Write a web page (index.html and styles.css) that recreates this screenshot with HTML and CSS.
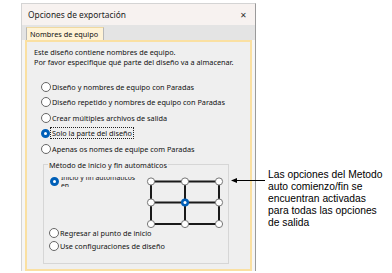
FILE: index.html
```html
<!DOCTYPE html>
<html lang="es">
<head>
<meta charset="utf-8">
<title>Opciones de exportación</title>
<link rel="stylesheet" href="styles.css">
</head>
<body>
<div class="stage">
  <div class="dialog">
    <div class="titlebar">
      <span class="title">Opciones de exportación</span>
      <span class="close">✕</span>
    </div>
    <div class="tabstrip">
      <div class="tab">Nombres de equipo</div>
    </div>
    <div class="panel">
      <p class="intro">Este diseño contiene nombres de equipo.<br>Por favor especifique qué parte del diseño va a almacenar.</p>
      <div class="options">
        <div class="opt"><span class="radio"></span><span>Diseño y nombres de equipo con Paradas</span></div>
        <div class="opt"><span class="radio"></span><span>Diseño repetido y nombres de equipo con Paradas</span></div>
        <div class="opt"><span class="radio"></span><span>Crear múltiples archivos de salida</span></div>
        <div class="opt"><span class="radio on"></span><span class="focus">Solo la parte del diseño</span></div>
        <div class="opt"><span class="radio"></span><span>Apenas os nomes de equipe com Paradas</span></div>
      </div>
      <fieldset class="group">
        <legend>Método de inicio y fin automáticos</legend>
        <div class="auto-row">
          <div class="auto-opt">
            <span class="radio on"></span>
            <span class="clip"><span class="clip-text">Inicio y fin automáticos en</span></span>
          </div>
          <svg class="grid" width="80" height="52" viewBox="0 0 80 52">
            <g stroke="#1a1a1a" stroke-width="2">
              <line x1="5" y1="4.5" x2="73" y2="4.5"/>
              <line x1="5" y1="25.5" x2="73" y2="25.5"/>
              <line x1="5" y1="47" x2="73" y2="47"/>
              <line x1="5" y1="4.5" x2="5" y2="47"/>
              <line x1="39" y1="4.5" x2="39" y2="47"/>
              <line x1="73" y1="4.5" x2="73" y2="47"/>
            </g>
            <g fill="#fff" stroke="#777" stroke-width="1">
              <circle cx="5" cy="4.5" r="3.6"/>
              <circle cx="39" cy="4.5" r="3.6"/>
              <circle cx="73" cy="4.5" r="3.6"/>
              <circle cx="5" cy="25.5" r="3.6"/>
              <circle cx="73" cy="25.5" r="3.6"/>
              <circle cx="5" cy="47" r="3.6"/>
              <circle cx="39" cy="47" r="3.6"/>
              <circle cx="73" cy="47" r="3.6"/>
            </g>
            <circle cx="39" cy="25.5" r="4" fill="#005fb8"/>
            <circle cx="39" cy="25.5" r="1.5" fill="#fff"/>
          </svg>
        </div>
        <div class="opt small"><span class="radio"></span><span>Regresar al punto de inicio</span></div>
        <div class="opt small"><span class="radio"></span><span>Use configuraciones de diseño</span></div>
      </fieldset>
    </div>
  </div>
  <p class="callout">Las opciones del Metodo<br>auto comienzo/fin se<br>encuentran activadas<br>para todas las opciones<br>de salida</p>
  <svg class="arrow" width="34" height="7" viewBox="0 0 34 7">
    <line x1="3" y1="3.5" x2="34" y2="3.5" stroke="#000" stroke-width="1"/>
    <path d="M0 3.5 L6 1 L6 6 Z" fill="#000"/>
  </svg>
</div>
</body>
</html>
```

FILE: styles.css
```css
html, body {
  margin: 0;
  padding: 0;
  background: #fff;
}
body {
  font-family: "Noto Sans", "Open Sans", sans-serif;
  color: #111;
  width: 392px;
  height: 273px;
  overflow: hidden;
}
.stage {
  position: relative;
  display: flex;
  align-items: flex-start;
}
.dialog {
  flex: none;
  margin: 3px 0 0 21px;
  width: 235px;
  height: 268px;
  box-sizing: border-box;
  border: 1px solid #d4d4d4;
  border-right-color: #9a9a9a;
  border-bottom: none;
  background: #f6f6f6;
  display: flex;
  flex-direction: column;
}
.titlebar {
  flex: none;
  height: 21px;
  background: #f7f2f0;
  display: flex;
  align-items: center;
  justify-content: space-between;
  padding: 0 8px 0 6px;
  font-size: 8.4px;
  color: #222;
}
.close {
  font-size: 8px;
  color: #333;
  margin-top: -1px;
}
.tabstrip {
  flex: none;
  height: 15px;
  background: #e4e4e4;
  display: flex;
  align-items: flex-end;
  padding-left: 4px;
}
.tab {
  height: 12px;
  line-height: 12px;
  background: #fff3d6;
  border: 1px solid #b8b8b8;
  border-bottom: none;
  border-top-color: #f0d9a0;
  padding: 0 5px 0 3px;
  font-size: 7.3px;
  color: #111;
}
.panel {
  flex: 1;
  min-height: 0;
  margin: 0 3px 0 3px;
  border: 2px solid #fae0a2;
  background: #efefef;
  font-size: 7.3px;
  display: flex;
  flex-direction: column;
}
.intro {
  flex: none;
  margin: 5px 0 0 7px;
  line-height: 10px;
}
.options {
  flex: none;
  margin-top: 12px;
  padding-left: 14px;
  display: flex;
  flex-direction: column;
}
.opt {
  flex: none;
  height: 15.5px;
  display: flex;
  align-items: center;
  gap: 1px;
  white-space: nowrap;
}
.radio {
  width: 8px;
  height: 8px;
  border: 1px solid #666;
  border-radius: 50%;
  background: #fff;
  flex: none;
  box-sizing: content-box;
}
.radio.on {
  background: #fff;
  border: 3.5px solid #005fb8;
  width: 3px;
  height: 3px;
}
.focus {
  outline: 1px dotted #222;
  outline-offset: 0;
  padding: 0 1px;
}
.group {
  flex: none;
  margin: 3px 21px 0 16px;
  padding: 0 2px 0 5px;
  border: 1px solid #d6d6d6;
  height: 104px;
  box-sizing: border-box;
  min-width: 0;
}
.group legend {
  padding: 0 1px;
  margin-left: -1px;
  line-height: 10px;
  font-size: 7.3px;
}
.auto-row {
  display: flex;
  justify-content: space-between;
  align-items: flex-start;
  margin-top: 7.5px;
  height: 49.5px;
}
.auto-opt {
  display: flex;
  align-items: flex-start;
  gap: 2px;
  padding-left: 1px;
}
.clip {
  display: block;
  width: 78px;
  height: 10px;
  overflow: hidden;
}
.clip-text {
  display: block;
  margin-top: -3px;
  line-height: 8px;
  font-size: 6.8px;
}
.grid {
  display: block;
  flex: none;
}
.opt.small {
  height: 13px;
  padding-left: 0;
}
.callout {
  margin: 169px 0 0 12px;
  font-family: "Liberation Sans", Arial, sans-serif;
  font-size: 10.3px;
  line-height: 12.1px;
  color: #000;
}
.arrow {
  position: absolute;
  left: 231px;
  top: 177px;
}
```
